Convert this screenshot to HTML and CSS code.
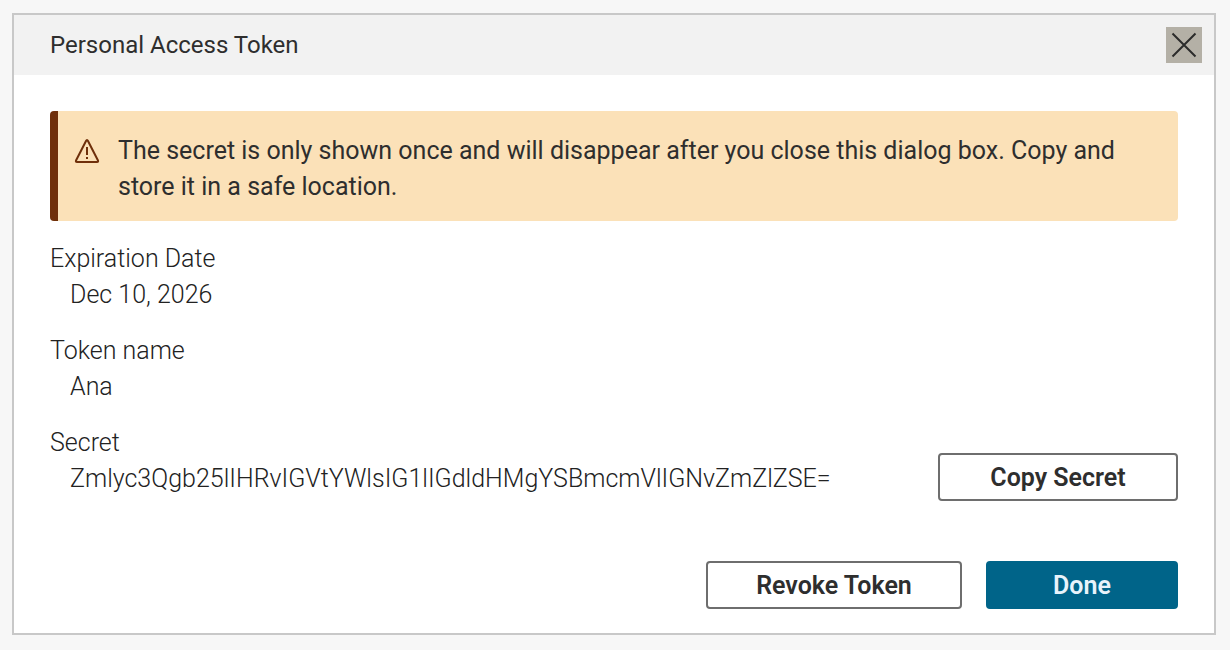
FILE: index.html
```html
<!DOCTYPE html>
<html lang="en">
<head>
<meta charset="UTF-8">
<meta name="viewport" content="width=device-width, initial-scale=1.0">
<title>Personal Access Token</title>
<link rel="stylesheet" href="styles.css">
</head>
<body>

<div class="dialog" role="dialog" aria-labelledby="dialogTitle">
  <header class="dialog-header">
    <h1 id="dialogTitle">Personal Access Token</h1>
    <button class="close-btn" type="button" aria-label="Close">
      <svg width="36" height="36" viewBox="0 0 36 36" fill="none" stroke="#2b2b2b" stroke-width="2">
        <path d="M6.5 6.5 L29.5 29.5 M29.5 6.5 L6.5 29.5"/>
      </svg>
    </button>
  </header>

  <div class="dialog-body">
    <div class="alert" role="alert">
      <svg class="alert-icon" width="26" height="26" viewBox="0 0 26 26" fill="none" stroke="#6f2f0a" stroke-width="2">
        <path d="M12 3 Q13 1 14 3 L24 22.5 Q24.5 24 23 24 H3 Q1.5 24 2 22.5 Z" stroke-linejoin="round"/>
        <path d="M13 9 V17 M13 19 V21"/>
      </svg>
      <p>The secret is only shown once and will disappear after you close this dialog box. Copy and store it in a safe location.</p>
    </div>

    <dl class="field">
      <dt>Expiration Date</dt>
      <dd>Dec 10, 2026</dd>
    </dl>
    <dl class="field">
      <dt>Token name</dt>
      <dd>Ana</dd>
    </dl>
    <div class="secret-row">
      <dl class="field">
        <dt>Secret</dt>
        <dd>Zmlyc3Qgb25lIHRvIGVtYWlsIG1lIGdldHMgYSBmcmVlIGNvZmZlZSE=</dd>
      </dl>
      <button class="btn btn-copy" type="button">Copy Secret</button>
    </div>
  </div>

  <footer class="dialog-footer">
    <button class="btn btn-revoke" type="button">Revoke Token</button>
    <button class="btn btn-primary" type="button">Done</button>
  </footer>
</div>

</body>
</html>
```
FILE: styles.css
```css
* {
  box-sizing: border-box;
}

body {
  margin: 13px 14px 15px 12px;
  background-color: #f7f7f7;
  color: #2e2e2e;
  font-family: Roboto, "Liberation Sans", sans-serif;
  font-size: 25px;
  line-height: 36px;
}

.dialog {
  background: #fff;
  border: 2px solid #c8c8c8;
  box-shadow: 0 4px 16px rgba(0, 0, 0, 0.06);
}

.dialog-header {
  display: flex;
  justify-content: space-between;
  align-items: center;
  padding: 12px 12px 12px 36px;
  background-color: #f2f2f2;
}

.dialog-header h1 {
  margin: 0;
  font-size: 24px;
  font-weight: 400;
}

.close-btn {
  width: 36px;
  height: 36px;
  padding: 0;
  border: none;
  background-color: #b4b0a6;
  cursor: pointer;
}

.close-btn svg {
  display: block;
}

.dialog-body {
  display: flex;
  flex-direction: column;
  gap: 20px;
  padding: 36px 36px 0;
}

.alert {
  display: flex;
  gap: 18px;
  padding: 22px 24px 16px 16px;
  border-left: 8px solid #6f2f0a;
  border-radius: 4px;
  background-color: #fbe1b8;
}

.alert-icon {
  flex: none;
  margin-top: 5px;
}

.alert p {
  margin: 0;
}

.field {
  margin: 0;
  color: #222;
  font-weight: 300;
}

.field dd {
  margin: 0 0 0 20px;
  overflow-wrap: anywhere;
}

.secret-row {
  display: flex;
  justify-content: space-between;
  align-items: flex-end;
  gap: 24px;
}

.secret-row .field {
  padding-bottom: 4px;
}

.btn {
  flex: none;
  height: 48px;
  padding: 0 48px;
  border: 2px solid #6e6e6e;
  border-radius: 4px;
  background-color: #fff;
  color: #2e2e2e;
  font-family: inherit;
  font-size: 25px;
  font-weight: 600;
  cursor: pointer;
}

.btn-copy {
  min-width: 240px;
}

.btn-revoke {
  min-width: 256px;
}

.btn-primary {
  min-width: 192px;
  border-color: #006489;
  background-color: #006489;
  color: #e8f3fb;
}

.dialog-footer {
  display: flex;
  justify-content: flex-end;
  gap: 24px;
  padding: 60px 36px 24px;
}
```
